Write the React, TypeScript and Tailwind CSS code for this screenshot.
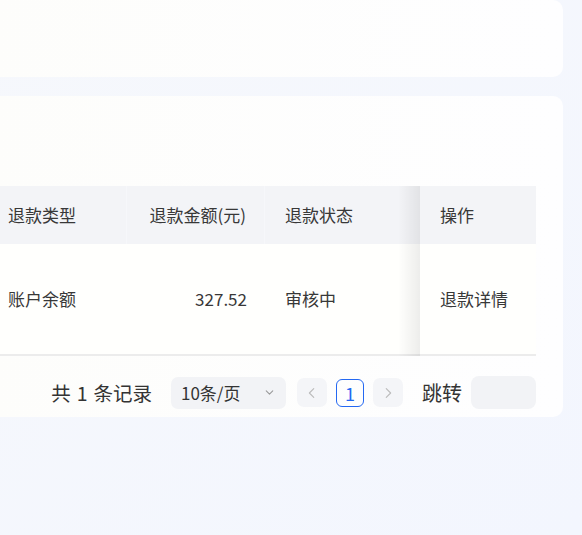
import React from "react";

const font = { fontFamily: '"Noto Sans CJK SC", "Noto Sans", sans-serif' };

function Chevron({ dir, className }: { dir: "left" | "right" | "down"; className?: string }) {
  const d =
    dir === "left" ? "M10 3 L5 8 L10 13" : dir === "right" ? "M6 3 L11 8 L6 13" : "M4 6 L8 10 L12 6";
  return (
    <svg viewBox="0 0 16 16" className={className} fill="none" stroke="currentColor" strokeWidth="1.3" strokeLinecap="round" strokeLinejoin="round">
      <path d={d} />
    </svg>
  );
}

export default function App() {
  return (
    <div
      className="w-[582px] h-[535px] overflow-hidden bg-gradient-to-br from-[#f6f8fc] to-[#f3f6fe] text-[#383838]"
      style={font}
    >
      <div className="ml-[-20px] w-[583px] h-[77px] bg-gradient-to-r from-[#fdfdfb] to-[#fefeff] rounded-[10px]" />
      <div className="mt-[19px] ml-[-20px] w-[583px] h-[321px] bg-gradient-to-r from-[#fdfdfb] to-[#fefeff] rounded-[10px] pt-[90px]">
        <div className="ml-[8px] w-[548px] flex">
          <div className="flex-1 flex flex-col">
            <div className="flex h-[58px] bg-[#f3f4f7] text-[17px] items-center">
              <div className="w-[139px] h-full flex items-center pl-[20px] border-r border-[#f6f7fa]">退款类型</div>
              <div className="w-[138px] h-full flex items-center justify-end pr-[18px] border-r border-[#f6f7fa]">退款金额(元)</div>
              <div className="flex-1 h-full flex items-center pl-[20px]">退款状态</div>
            </div>
            <div className="flex h-[112px] text-[17px] items-center border-b-2 border-[#ececec] bg-[#fffffd]">
              <div className="w-[139px] pl-[20px]">账户余额</div>
              <div className="w-[138px] text-right pr-[18px]">327.52</div>
              <div className="flex-1 pl-[20px]">审核中</div>
            </div>
          </div>
          <div className="relative w-[116px] flex flex-col">
            <div className="absolute left-[-22px] top-0 w-[22px] h-[170px] bg-gradient-to-r from-transparent to-[rgba(0,0,0,0.07)] pointer-events-none" />
            <div className="h-[58px] bg-[#f3f4f7] flex items-center pl-[20px] text-[17px]">操作</div>
            <div className="h-[112px] bg-[#fffffd] flex items-center pl-[20px] text-[17px] border-b-2 border-[#ececec]">退款详情</div>
          </div>
        </div>
        <div className="ml-[8px] w-[548px] mt-[20px] flex items-center justify-end h-[33px]">
          <div className="flex items-center gap-[6px] text-[19.5px] text-[#333]">
            <span>共</span>
            <span>1</span>
            <span>条记录</span>
          </div>
          <div className="ml-[19px] w-[115px] h-[32px] bg-[#f2f3f6] rounded-[7px] flex items-center pl-[10px] pr-[10px] justify-between">
            <span className="text-[17px] text-[#333]">10条/页</span>
            <Chevron dir="down" className="w-[13px] h-[13px] text-[#999]" />
          </div>
          <div className="ml-[11px] w-[30px] h-[29px] bg-[#f4f5f8] rounded-[7px] flex items-center justify-center">
            <Chevron dir="left" className="w-[14px] h-[14px] text-[#bbb]" />
          </div>
          <div className="ml-[9px] w-[28px] h-[28px] border-[1.5px] border-[#2468f2] rounded-[6px] flex items-center justify-center text-[#2468f2] text-[18px] leading-none">
            1
          </div>
          <div className="ml-[9px] w-[30px] h-[29px] bg-[#f4f5f8] rounded-[7px] flex items-center justify-center">
            <Chevron dir="right" className="w-[14px] h-[14px] text-[#bbb]" />
          </div>
          <span className="ml-[19px] text-[20px] text-[#333]">跳转</span>
          <div className="ml-[9px] w-[65px] h-[33px] bg-[#f2f3f6] rounded-[8px]" />
        </div>
      </div>
    </div>
  );
}
